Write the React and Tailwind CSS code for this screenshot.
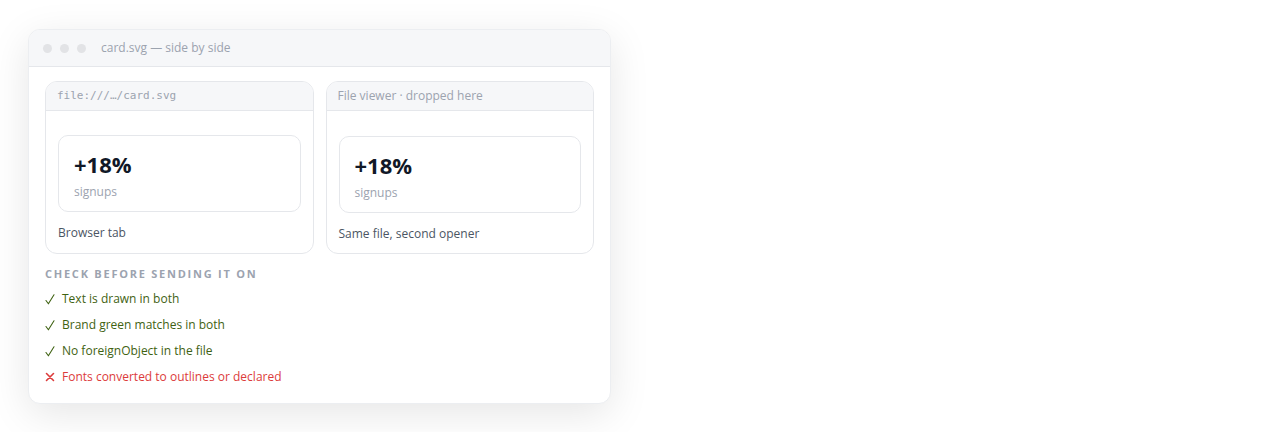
export default function App() {
  const font = { fontFamily: '"Open Sans", "Noto Sans", sans-serif' };
  const Panel = ({ header, mono, caption, extraTop }) => (
    <div className="flex-1 min-w-0 rounded-xl border border-[#e5e7eb] bg-white overflow-hidden">
      <div
        className="h-[29px] flex items-center px-[11px] bg-[#f6f7f9] border-b border-[#e5e7eb] text-[12px] text-[#9ca3af]"
        style={mono ? { fontFamily: '"DejaVu Sans Mono", "Liberation Mono", monospace', fontSize: '11px' } : undefined}
      >
        {header}
      </div>
      <div className={`px-3 ${extraTop ? 'pt-[25px]' : 'pt-[24px]'} pb-[11px]`}>
        <div className="rounded-[10px] border border-[#e5e7eb] h-[77px] pl-[15px] pt-[14px]">
          <div className="text-[22px] leading-[28px] font-bold text-[#111827]">+18%</div>
          <div className="text-[12px] leading-[16px] mt-[6px] text-[#9ca3af]">signups</div>
        </div>
        <div className="text-[12px] leading-[16px] mt-[13px] text-[#4b5563]">{caption}</div>
      </div>
    </div>
  );
  const items = [
    ['Text is drawn in both', true],
    ['Brand green matches in both', true],
    ['No foreignObject in the file', true],
    ['Fonts converted to outlines or declared', false],
  ];
  return (
    <div className="min-h-[432px] bg-white pt-[29px] pl-[28px]" style={font}>
      <div className="w-[583px] rounded-xl bg-white border border-[#eceef1] shadow-[0_10px_40px_rgba(0,0,0,0.10)] overflow-hidden">
        <div className="h-[37px] flex items-center bg-[#f6f7f9] border-b border-[#e5e7eb] pl-[14px]">
          <div className="flex gap-[8px]">
            <span className="w-[9px] h-[9px] rounded-full bg-[#e2e3e6]" />
            <span className="w-[9px] h-[9px] rounded-full bg-[#e2e3e6]" />
            <span className="w-[9px] h-[9px] rounded-full bg-[#e2e3e6]" />
          </div>
          <span className="ml-[15px] text-[12px] text-[#9ca3af]">card.svg — side by side</span>
        </div>
        <div className="px-4 pt-[14px] pb-[13px]">
          <div className="flex gap-[12px]">
            <Panel header="file:///…/card.svg" mono caption="Browser tab" />
            <Panel header="File viewer · dropped here" caption="Same file, second opener" extraTop />
          </div>
          <div className="mt-[13px] text-[11px] leading-[14px] font-bold tracking-[0.16em] text-[#9ca3af]">
            CHECK BEFORE SENDING IT ON
          </div>
          <ul className="mt-[5px]">
            {items.map(([t, ok]) => (
              <li key={t} className={`h-[26px] flex items-center text-[12px] ${ok ? 'text-[#3f6212]' : 'text-[#dc3b3b]'}`}>
                <span className="w-[17px] flex items-center">
                  {ok ? (
                    <svg width="10" height="11" viewBox="0 0 10 11" fill="none" stroke="currentColor" strokeWidth="1.1" strokeLinecap="round" strokeLinejoin="round">
                      <path d="M1 6.5 L3.4 9.8 L9 0.8" />
                    </svg>
                  ) : (
                    <svg width="10" height="10" viewBox="0 0 10 10" fill="none" stroke="currentColor" strokeWidth="1.6" strokeLinecap="round">
                      <path d="M1.5 1.5 L8.5 8.5 M8.5 1.5 L1.5 8.5" />
                    </svg>
                  )}
                </span>
                <span>{t}</span>
              </li>
            ))}
          </ul>
        </div>
      </div>
    </div>
  );
}
